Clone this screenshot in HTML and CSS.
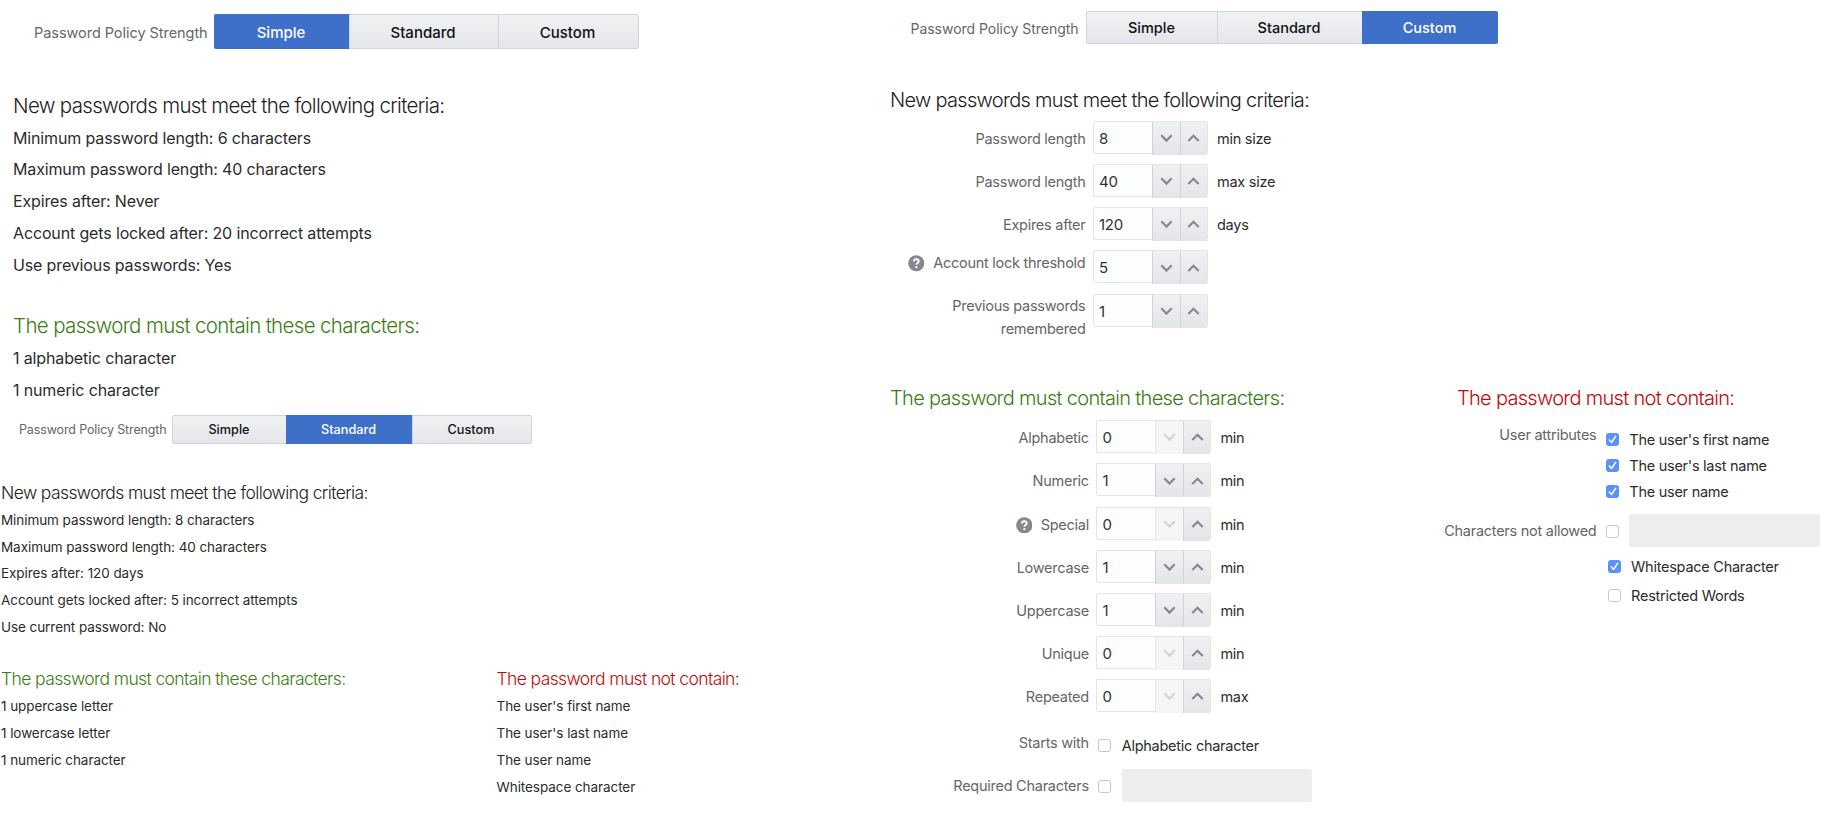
FILE: index.html
```html
<!DOCTYPE html>
<html lang="en">
<head>
<meta charset="utf-8">
<title>Password Policy</title>
<link rel="stylesheet" href="styles.css">
</head>
<body>
<svg class="defs" aria-hidden="true">
  <symbol id="down" viewBox="0 0 12 8"><path d="M1.2 1.2 6 6.1 10.8 1.2" fill="none" stroke="currentColor" stroke-width="2"/></symbol>
  <symbol id="up" viewBox="0 0 12 8"><path d="M1.2 6.5 6 1.6 10.8 6.5" fill="none" stroke="currentColor" stroke-width="2"/></symbol>
  <symbol id="help" viewBox="0 0 17 17"><circle cx="8.5" cy="8.5" r="8.3" fill="#85888c"/><path d="M6 6.7C6.1 5.2 7.1 4.4 8.5 4.4S11 5.2 11 6.5C11 8.2 8.6 8.2 8.6 10.1" fill="none" stroke="#fff" stroke-width="1.9"/><circle cx="8.6" cy="12.4" r="1.2" fill="#fff"/></symbol>
  <symbol id="tick" viewBox="0 0 13 13"><path d="M3.4 6.9 5.6 9.4 9.6 3.4" fill="none" stroke="#fff" stroke-width="1.5" stroke-linecap="round" stroke-linejoin="round"/></symbol>
</svg>
<main class="page">
  <div class="left">
    <section class="simple">
      <div class="policy">
        <span class="policy-label">Password Policy Strength</span>
        <div class="segments"><button class="on">Simple</button><button>Standard</button><button>Custom</button></div>
      </div>
      <h2>New passwords must meet the following criteria:</h2>
      <ul>
        <li>Minimum password length: 6 characters</li>
        <li>Maximum password length: 40 characters</li>
        <li>Expires after: Never</li>
        <li>Account gets locked after: 20 incorrect attempts</li>
        <li>Use previous passwords: Yes</li>
      </ul>
      <h2 class="must second">The password must contain these characters:</h2>
      <ul>
        <li>1 alphabetic character</li>
        <li>1 numeric character</li>
      </ul>
    </section>
    <section class="standard">
      <div class="policy">
        <span class="policy-label">Password Policy Strength</span>
        <div class="segments"><button>Simple</button><button class="on">Standard</button><button>Custom</button></div>
      </div>
      <h2>New passwords must meet the following criteria:</h2>
      <ul>
        <li>Minimum password length: 8 characters</li>
        <li>Maximum password length: 40 characters</li>
        <li>Expires after: 120 days</li>
        <li>Account gets locked after: 5 incorrect attempts</li>
        <li>Use current password: No</li>
      </ul>
      <div class="pair">
        <div>
          <h2 class="must">The password must contain these characters:</h2>
          <ul><li>1 uppercase letter</li><li>1 lowercase letter</li><li>1 numeric character</li></ul>
        </div>
        <div>
          <h2 class="mustnot">The password must not contain:</h2>
          <ul><li>The user's first name</li><li>The user's last name</li><li>The user name</li><li>Whitespace character</li></ul>
        </div>
      </div>
    </section>
  </div>
  <section class="custom">
    <div class="policy">
      <span class="policy-label">Password Policy Strength</span>
      <div class="segments"><button>Simple</button><button>Standard</button><button class="on">Custom</button></div>
    </div>
    <h2>New passwords must meet the following criteria:</h2>
    <div class="rows criteria">
      <div class="row"><label>Password length</label><div class="spin"><span>8</span><i><svg><use href="#down"/></svg></i><i><svg><use href="#up"/></svg></i></div><span class="unit">min size</span></div>
      <div class="row"><label>Password length</label><div class="spin"><span>40</span><i><svg><use href="#down"/></svg></i><i><svg><use href="#up"/></svg></i></div><span class="unit">max size</span></div>
      <div class="row"><label>Expires after</label><div class="spin"><span>120</span><i><svg><use href="#down"/></svg></i><i><svg><use href="#up"/></svg></i></div><span class="unit">days</span></div>
      <div class="row"><label class="high"><svg class="help"><use href="#help"/></svg>Account lock threshold</label><div class="spin"><span>5</span><i><svg><use href="#down"/></svg></i><i><svg><use href="#up"/></svg></i></div></div>
      <div class="row"><label class="high">Previous passwords<br>remembered</label><div class="spin"><span>1</span><i><svg><use href="#down"/></svg></i><i><svg><use href="#up"/></svg></i></div></div>
    </div>
    <div class="rules">
      <div class="contain">
        <h2 class="must">The password must contain these characters:</h2>
        <div class="rows">
          <div class="row"><label>Alphabetic</label><div class="spin"><span>0</span><i class="off"><svg><use href="#down"/></svg></i><i><svg><use href="#up"/></svg></i></div><span class="unit">min</span></div>
          <div class="row"><label>Numeric</label><div class="spin"><span>1</span><i><svg><use href="#down"/></svg></i><i><svg><use href="#up"/></svg></i></div><span class="unit">min</span></div>
          <div class="row"><label><svg class="help"><use href="#help"/></svg>Special</label><div class="spin"><span>0</span><i class="off"><svg><use href="#down"/></svg></i><i><svg><use href="#up"/></svg></i></div><span class="unit">min</span></div>
          <div class="row"><label>Lowercase</label><div class="spin"><span>1</span><i><svg><use href="#down"/></svg></i><i><svg><use href="#up"/></svg></i></div><span class="unit">min</span></div>
          <div class="row"><label>Uppercase</label><div class="spin"><span>1</span><i><svg><use href="#down"/></svg></i><i><svg><use href="#up"/></svg></i></div><span class="unit">min</span></div>
          <div class="row"><label>Unique</label><div class="spin"><span>0</span><i class="off"><svg><use href="#down"/></svg></i><i><svg><use href="#up"/></svg></i></div><span class="unit">min</span></div>
          <div class="row"><label>Repeated</label><div class="spin"><span>0</span><i class="off"><svg><use href="#down"/></svg></i><i><svg><use href="#up"/></svg></i></div><span class="unit">max</span></div>
        </div>
        <div class="opt starts"><label>Starts with</label><div class="check"><span class="box"></span><span>Alphabetic character</span></div></div>
        <div class="opt required"><label>Required Characters</label><div class="check"><span class="box"></span><span class="field"></span></div></div>
      </div>
      <div class="exclude">
        <h2 class="mustnot">The password must not contain:</h2>
        <div class="opt attrs">
          <label>User attributes</label>
          <div class="checks">
            <div class="check"><svg class="box ticked"><use href="#tick"/></svg><span>The user's first name</span></div>
            <div class="check"><svg class="box ticked"><use href="#tick"/></svg><span>The user's last name</span></div>
            <div class="check"><svg class="box ticked"><use href="#tick"/></svg><span>The user name</span></div>
          </div>
        </div>
        <div class="opt banned"><label>Characters not allowed</label><div class="check"><span class="box"></span><span class="field"></span></div></div>
        <div class="extras">
          <div class="check"><svg class="box ticked"><use href="#tick"/></svg><span>Whitespace Character</span></div>
          <div class="check"><span class="box"></span><span>Restricted Words</span></div>
        </div>
      </div>
    </div>
  </section>
</main>
</body>
</html>
```
FILE: styles.css
```css
* { box-sizing: border-box; }
body { margin: 0; background: #fff; color: #2c2c2c; font-family: Inter, "Liberation Sans", sans-serif; }
.defs { position: absolute; width: 0; height: 0; }
.page { display: flex; width: 1827px; height: 835px; overflow: hidden; }
.left { width: 890px; flex: none; }
h2 { margin: 0; font-weight: 320; color: #222; white-space: nowrap; }
.must { color: #3c7d14; }
.mustnot { color: #c00a0a; }
ul { list-style: none; margin: 0; padding: 0; white-space: nowrap; }

/* Segmented strength selector */
.policy { display: flex; align-items: center; }
.policy-label { color: #666; white-space: nowrap; }
.segments { display: grid; height: 100%; border: 1px solid #d0d5db; border-radius: 2px; background: linear-gradient(#f1f2f4, #e4e6e9); }
.segments button { margin: 0; padding: 0 2px 0 0; border: 0; border-left: 1px solid #d0d5db; background: none; color: #111; font: inherit; font-weight: 500; }
.segments button:first-child { border-left-color: transparent; }
.segments .on { margin: -1px 0; background: #3f70c9; color: #fff; border-left-color: #3f70c9; }
.segments .on:first-child { margin-left: -1px; border-radius: 2px 0 0 2px; }
.segments .on:last-child { margin-right: -1px; border-radius: 0 2px 2px 0; }

.simple { padding: 14px 0 0 13px; height: 415px; }
.simple .policy { height: 35px; margin-bottom: 40.8px; padding-left: 21px; font-size: 15px; }
.simple .policy-label { width: 180px; padding-top: 1px; font-size: 14.5px; letter-spacing: -.05px; }
.simple .segments { grid-template-columns: 134px 149px 140px; letter-spacing: -.36px; }
.simple .segments button { padding-top: 1px; }
.simple h2 { font-size: 20.5px; line-height: 31.8px; letter-spacing: -.68px; }
.simple h2 + ul { padding-top: 1px; }
.simple li { font-size: 16px; line-height: 31.8px; letter-spacing: -.14px; }
.simple h2.second { margin-top: 28.4px; letter-spacing: -.65px; }

.standard { padding-left: 1px; }
.standard .policy { height: 29px; margin-bottom: 34.6px; padding-left: 18px; font-size: 12.7px; }
.standard .policy-label { width: 153px; font-size: 12.5px; letter-spacing: -.13px; }
.standard .segments { grid-template-columns: 113px 126px 119px; letter-spacing: -.28px; }
.standard h2 { font-size: 17.5px; line-height: 28px; letter-spacing: -.61px; }
.standard li { font-size: 13.5px; line-height: 26.9px; letter-spacing: -.07px; }
.pair { display: grid; grid-template-columns: 495.5px 1fr; margin-top: 24.2px; }

.custom { flex: none; width: 937px; padding-top: 11px; font-size: 14.5px; letter-spacing: -.26px; }
.custom .policy { height: 33px; margin-bottom: 39.6px; padding-left: 20.5px; }
.custom .policy-label { width: 175.5px; padding-top: 1px; font-size: 14px; letter-spacing: -.03px; }
.custom .segments { grid-template-columns: 130px 145px 135px; }
.custom h2 { font-size: 20px; line-height: 32px; letter-spacing: -.7px; }
.criteria { padding-top: 5.4px; height: 266.6px; }

/* Stepper rows */
.row { display: flex; height: 43.15px; }
.row label { display: flex; justify-content: flex-end; align-items: flex-start; gap: 8.5px; flex: none; width: 195.5px; padding-top: 6px; margin-right: 7.5px; line-height: 23px; color: #666; text-align: right; }
.row label.high { padding-top: .7px; }
.help { width: 16.6px; height: 16.6px; margin-top: 4px; }
.spin { display: grid; grid-template-columns: 57.5px 28px 1fr; width: 115px; height: 33px; border: 1px solid #e2e5e8; border-radius: 2px; background: #fcfdfe; color: #333; }
.spin span { padding: 1px 0 0 5px; font-size: 15px; line-height: 32px; }
.spin i { display: flex; align-items: center; justify-content: center; border-left: 1px solid #cfd4da; background: linear-gradient(#f0f1f3, #e3e5e8); color: #85898d; }
.spin i svg { width: 13px; height: 8.7px; }
.spin i.off { background: #f4f5f6; border-left-color: #e6e8ea; color: #d2d4d6; }
.unit { margin-left: 9px; line-height: 23px; padding-top: 6px; }

.rules { display: flex; }
.contain { width: 554px; flex: none; }
.custom .contain h2 { letter-spacing: -.68px; }
.contain .rows { padding-top: 6.1px; }
.contain label { width: 198.9px; }

/* Checkbox options */
.opt { display: flex; align-items: flex-start; }
.opt label { flex: none; line-height: 23px; color: #666; text-align: right; }
.check { display: flex; align-items: center; line-height: 23px; white-space: nowrap; }
.box { flex: none; width: 13px; height: 13px; border: 1px solid #c6c6c6; border-radius: 3px; background: #fff; margin-right: 10.5px; }
.box.ticked { border: 0; background: #5b92f8; }
.field { width: 190.5px; height: 33px; background: #ededef; border-radius: 2px; }
.starts { padding-top: 8.4px; }
.starts .check { margin: 3.6px 0 0 9.3px; }
.required { padding-top: 11.4px; }
.required label, .banned label { padding-top: 5.2px; }
.required .check { margin-left: 9.3px; }
.required .box, .banned .box { margin-top: 3px; }
.mustnot { padding-left: 13px; }
.standard .mustnot { padding-left: 0; }
.exclude label { width: 152.5px; }
.attrs { padding-top: 8.9px; }
.checks { margin: 4.7px 0 0 9.3px; }
.attrs .check { height: 26px; align-items: flex-start; }
.attrs .box { margin-top: 5px; }
.banned { padding-top: 8.2px; }
.banned .check { margin-left: 9.3px; }
.extras { padding: 7.6px 0 0 163.6px; }
.extras .check { height: 23px; margin-bottom: 6px; }
```
